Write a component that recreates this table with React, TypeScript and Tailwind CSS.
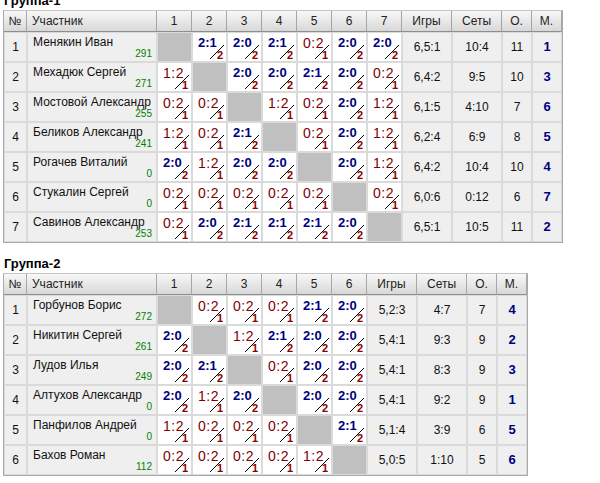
import React from 'react';

type Row = {
  n: string;
  r: number;
  s: (string | null)[];
  games: string;
  sets: string;
  pts: number;
  place: number;
};

const group1: Row[] = [
  { n: 'Менякин Иван', r: 291, s: [null, '2:1', '2:0', '2:1', '0:2', '2:0', '2:0'], games: '6,5:1', sets: '10:4', pts: 11, place: 1 },
  { n: 'Мехадюк Сергей', r: 271, s: ['1:2', null, '2:0', '2:0', '2:1', '2:0', '0:2'], games: '6,4:2', sets: '9:5', pts: 10, place: 3 },
  { n: 'Мостовой Александр', r: 255, s: ['0:2', '0:2', null, '1:2', '0:2', '2:0', '1:2'], games: '6,1:5', sets: '4:10', pts: 7, place: 6 },
  { n: 'Беликов Александр', r: 241, s: ['1:2', '0:2', '2:1', null, '0:2', '2:0', '1:2'], games: '6,2:4', sets: '6:9', pts: 8, place: 5 },
  { n: 'Рогачев Виталий', r: 0, s: ['2:0', '1:2', '2:0', '2:0', null, '2:0', '1:2'], games: '6,4:2', sets: '10:4', pts: 10, place: 4 },
  { n: 'Стукалин Сергей', r: 0, s: ['0:2', '0:2', '0:2', '0:2', '0:2', null, '0:2'], games: '6,0:6', sets: '0:12', pts: 6, place: 7 },
  { n: 'Савинов Александр', r: 253, s: ['0:2', '2:0', '2:1', '2:1', '2:1', '2:0', null], games: '6,5:1', sets: '10:5', pts: 11, place: 2 },
];

const group2: Row[] = [
  { n: 'Горбунов Борис', r: 272, s: [null, '0:2', '0:2', '0:2', '2:1', '2:0'], games: '5,2:3', sets: '4:7', pts: 7, place: 4 },
  { n: 'Никитин Сергей', r: 261, s: ['2:0', null, '1:2', '2:1', '2:0', '2:0'], games: '5,4:1', sets: '9:3', pts: 9, place: 2 },
  { n: 'Лудов Илья', r: 249, s: ['2:0', '2:1', null, '0:2', '2:0', '2:0'], games: '5,4:1', sets: '8:3', pts: 9, place: 3 },
  { n: 'Алтухов Александр', r: 0, s: ['2:0', '1:2', '2:0', null, '2:0', '2:0'], games: '5,4:1', sets: '9:2', pts: 9, place: 1 },
  { n: 'Панфилов Андрей', r: 0, s: ['1:2', '0:2', '0:2', '0:2', null, '2:1'], games: '5,1:4', sets: '3:9', pts: 6, place: 5 },
  { n: 'Бахов Роман', r: 112, s: ['0:2', '0:2', '0:2', '0:2', '1:2', null], games: '5,0:5', sets: '1:10', pts: 5, place: 6 },
];

function HeadCell({ children, left }: { children: React.ReactNode; left?: boolean }) {
  return (
    <div
      className={
        'h-[21px] flex items-center border-r border-b border-r-[#a6a6a6] border-b-[#8e8e8e] bg-linear-to-b from-[#f8f8f8] to-[#d8d8d8] text-[12px] text-[#222] ' +
        (left ? 'justify-start pl-[5px]' : 'justify-center')
      }
    >
      {children}
    </div>
  );
}

function ScoreCell({ s }: { s: string | null }) {
  if (s === null) {
    return <div className="h-[30px] border border-[#dadada] bg-[#c0c0c0]" />;
  }
  const [a, b] = s.split(':').map(Number);
  const win = a > b;
  return (
    <div className="relative h-[30px] border border-[#dadada] bg-white">
      <div
        className={
          'pt-[3px] leading-[14px] ' +
          (win
            ? 'pl-[5px] text-[13px] font-bold text-[#000080]'
            : 'pl-[5px] text-[14px] tracking-[0.5px] font-normal text-[#800000]')
        }
      >
        {s}
      </div>
      <svg className="absolute right-[2px] bottom-[2px] w-[14px] h-[14px]" viewBox="0 0 14 14">
        <line x1="0" y1="14" x2="14" y2="0" stroke="#000" strokeWidth="1" />
      </svg>
      <span className="absolute right-[3px] bottom-[1px] text-[11px] leading-[10px] font-bold text-[#8b0000]">
        {win ? 2 : 1}
      </span>
    </div>
  );
}

function Table({ rows, cols }: { rows: Row[]; cols: number }) {
  const gridCls =
    cols === 7
      ? 'grid grid-cols-[23px_130px_repeat(7,35px)_50px_50px_30px_30px] w-[560px]'
      : 'grid grid-cols-[23px_130px_repeat(6,35px)_50px_50px_30px_30px] w-[525px]';
  return (
    <div className={gridCls + ' ml-[3px] border border-[#a9a9a9] border-t-[#c4c4c4]'}>
      <HeadCell>№</HeadCell>
      <HeadCell left>Участник</HeadCell>
      {Array.from({ length: cols }, (_, i) => (
        <HeadCell key={i}>{i + 1}</HeadCell>
      ))}
      <HeadCell>Игры</HeadCell>
      <HeadCell>Сеты</HeadCell>
      <HeadCell>О.</HeadCell>
      <HeadCell>М.</HeadCell>
      {rows.map((row, ri) => (
        <React.Fragment key={ri}>
          <div className="h-[30px] border border-[#dadada] bg-[#efefef] flex items-center justify-center text-[12px] text-[#111]">
            {ri + 1}
          </div>
          <div className="h-[30px] border border-[#dadada] bg-[#efefef] flex flex-col justify-between pl-[5px] pr-[4px] pt-[2px] pb-[2px]">
            <div className="text-[12px] leading-[14px] text-[#111] whitespace-nowrap">{row.n}</div>
            <div className="text-right text-[10px] leading-[10px] text-[#008000]">{row.r}</div>
          </div>
          {row.s.map((s, ci) => (
            <ScoreCell key={ci} s={s} />
          ))}
          <div className="h-[30px] border border-[#dadada] bg-[#efefef] flex items-center justify-center text-[12px] text-[#111]">
            {row.games}
          </div>
          <div className="h-[30px] border border-[#dadada] bg-[#efefef] flex items-center justify-center text-[12px] text-[#111]">
            {row.sets}
          </div>
          <div className="h-[30px] border border-[#dadada] bg-[#efefef] flex items-center justify-center text-[12px] text-[#111]">
            {row.pts}
          </div>
          <div className="h-[30px] border border-[#dadada] bg-[#efefef] flex items-center justify-center text-[13px] font-bold text-[#000080]">
            {row.place}
          </div>
        </React.Fragment>
      ))}
    </div>
  );
}

export default function App() {
  return (
    <div className="w-[600px] h-[483px] overflow-hidden bg-white font-['Liberation_Sans',Arial,sans-serif]">
      <div className="-mt-[8px]">
        <div className="h-[18px] leading-[18px] text-[13px] font-bold pl-[4px] text-black">Группа-1</div>
        <Table rows={group1} cols={7} />
        <div className="mt-[12px] h-[18px] leading-[18px] text-[13px] font-bold pl-[4px] text-black">Группа-2</div>
        <Table rows={group2} cols={6} />
      </div>
    </div>
  );
}
